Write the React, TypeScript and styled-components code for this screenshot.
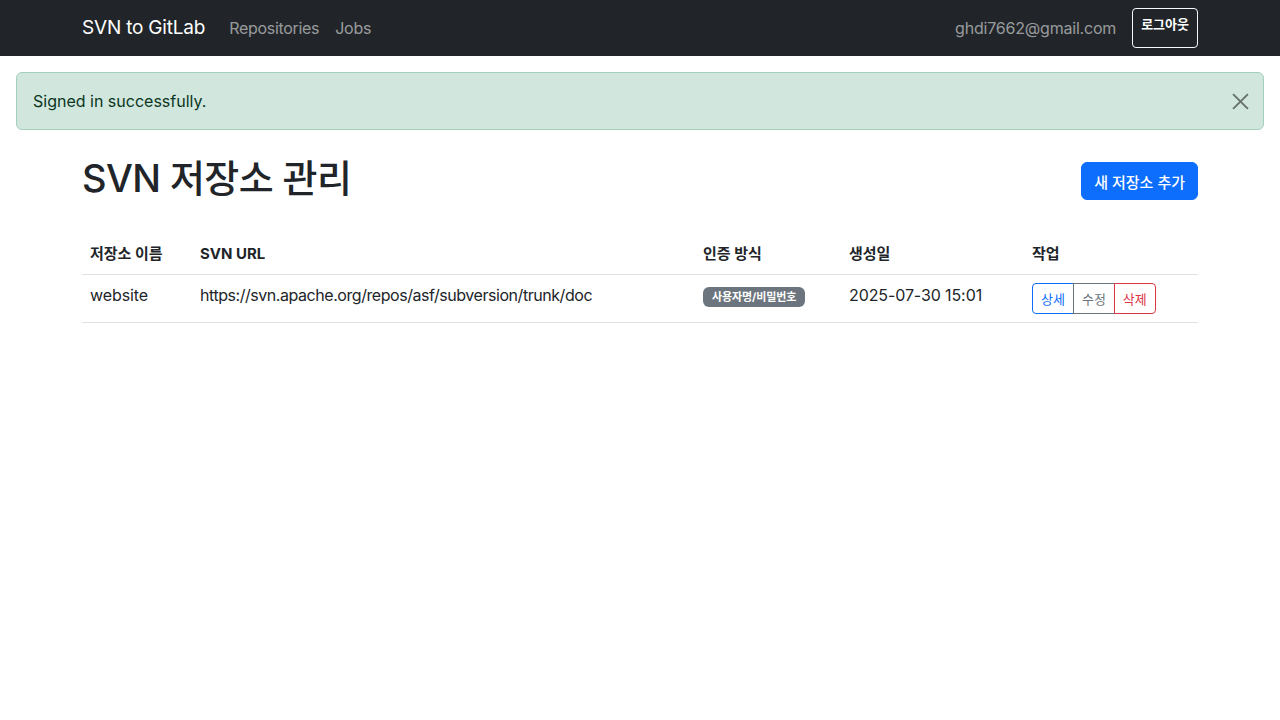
import React from 'react';
import styled, { createGlobalStyle } from 'styled-components';

const GlobalStyle = createGlobalStyle`
    * { box-sizing: border-box; }
    body {
        margin: 0;
        font-family: Inter, "Noto Sans CJK KR", "Noto Sans", sans-serif;
        font-size: 16px;
        line-height: 1.5;
        color: #212529;
        background: #fff;
    }
`;

const Navbar = styled.nav`
    height: 56px;
    background: #212529;
`;

const Container = styled.div`
    width: 1140px;
    margin: 0 auto;
    padding: 0 12px;
`;

const NavInner = styled(Container)`
    height: 56px;
    display: flex;
    align-items: center;
    justify-content: space-between;
`;

const Brand = styled.span`
    font-size: 19px;
    color: #fff;
    margin-right: 24px;
    letter-spacing: -0.2px;
`;

const NavLeft = styled.div`
    display: flex;
    align-items: center;
`;

const NavLink = styled.a`
    color: rgba(255, 255, 255, 0.55);
    font-size: 16px;
    letter-spacing: -0.3px;
    & + & { margin-left: 16px; }
`;

const NavRight = styled.div`
    display: flex;
    align-items: stretch;
    height: 40px;
`;

const UserEmail = styled.span`
    color: rgba(255, 255, 255, 0.55);
    font-size: 16px;
    align-self: center;
    margin-right: 16px;
    letter-spacing: -0.2px;
`;

const LogoutButton = styled.button`
    font-family: inherit;
    background: transparent;
    border: 1px solid #f8f9fa;
    color: #fff;
    border-radius: 4px;
    font-size: 13px;
    font-weight: 600;
    padding: 6px 8px 0;
    line-height: 18px;
    display: flex;
    align-items: flex-start;
`;

const Alert = styled.div`
    margin: 16px;
    height: 58px;
    padding: 0 16px;
    display: flex;
    align-items: center;
    justify-content: space-between;
    background: #d1e7dd;
    border: 1px solid #a3cfbb;
    border-radius: 6px;
    color: #0a3622;
    font-size: 16px;
`;

const CloseButton = styled.button`
    background: transparent;
    border: 0;
    padding: 0;
    width: 18px;
    height: 18px;
    margin-right: -2px;
    opacity: 0.5;
    display: flex;
    align-items: center;
    justify-content: center;
`;

const Header = styled.div`
    display: flex;
    align-items: center;
    justify-content: space-between;
    margin-top: 24px;
    margin-bottom: 32px;
`;

const Title = styled.h1`
    margin: 0;
    font-size: 38px;
    font-weight: 500;
    line-height: 48px;
    letter-spacing: -0.6px;
`;

const PrimaryButton = styled.button`
    font-family: inherit;
    background: #0d6efd;
    color: #fff;
    border: 1px solid #0d6efd;
    border-radius: 6px;
    font-size: 15px;
    font-weight: 500;
    height: 38px;
    padding: 0 12px;
    margin-top: 6px;
`;

const Table = styled.table`
    width: 100%;
    border-collapse: collapse;
`;

const Th = styled.th<{ $w: number }>`
    width: ${(p) => p.$w}px;
    text-align: left;
    font-size: 15px;
    font-weight: 700;
    padding: 8px;
    height: 40px;
    border-bottom: 1px solid #dee2e6;
`;

const Td = styled.td<{ $tight?: boolean }>`
    padding: 8px;
    height: 48px;
    vertical-align: top;
    font-size: 16px;
    border-bottom: 1px solid #dee2e6;
    letter-spacing: ${(p) => (p.$tight ? '-0.45px' : '-0.1px')};
`;

const Badge = styled.span`
    display: inline-block;
    background: #6c757d;
    color: #fff;
    font-size: 11px;
    font-weight: 700;
    line-height: 20px;
    padding: 0 9px;
    border-radius: 6px;
    margin-top: 4px;
`;

const ButtonGroup = styled.div`
    display: inline-flex;
`;

const GroupButton = styled.button<{ $color: string }>`
    font-family: inherit;
    background: #fff;
    color: ${(p) => p.$color};
    border: 1px solid ${(p) => p.$color};
    font-size: 13px;
    height: 31px;
    padding: 0 8px;
    margin-left: -1px;
    &:first-child { margin-left: 0; border-radius: 4px 0 0 4px; }
    &:last-child { border-radius: 0 4px 4px 0; }
`;

export default function App() {
    return (
        <>
            <GlobalStyle />
            <Navbar>
                <NavInner>
                    <NavLeft>
                        <Brand>SVN to GitLab</Brand>
                        <NavLink>Repositories</NavLink>
                        <NavLink>Jobs</NavLink>
                    </NavLeft>
                    <NavRight>
                        <UserEmail>ghdi7662@gmail.com</UserEmail>
                        <LogoutButton>로그아웃</LogoutButton>
                    </NavRight>
                </NavInner>
            </Navbar>
            <Alert>
                <span>Signed in successfully.</span>
                <CloseButton aria-label="Close">
                    <svg width="17" height="17" viewBox="0 0 16 16">
                        <path d="M1 1L15 15M15 1L1 15" stroke="#000" strokeWidth="1.8" />
                    </svg>
                </CloseButton>
            </Alert>
            <Container>
                <Header>
                    <Title>SVN 저장소 관리</Title>
                    <PrimaryButton>새 저장소 추가</PrimaryButton>
                </Header>
                <Table>
                    <thead>
                        <tr>
                            <Th $w={110}>저장소 이름</Th>
                            <Th $w={503}>SVN URL</Th>
                            <Th $w={146}>인증 방식</Th>
                            <Th $w={183}>생성일</Th>
                            <Th $w={174}>작업</Th>
                        </tr>
                    </thead>
                    <tbody>
                        <tr>
                            <Td>website</Td>
                            <Td $tight>https://svn.apache.org/repos/asf/subversion/trunk/doc</Td>
                            <Td><Badge>사용자명/비밀번호</Badge></Td>
                            <Td>2025-07-30 15:01</Td>
                            <Td>
                                <ButtonGroup>
                                    <GroupButton $color="#0d6efd">상세</GroupButton>
                                    <GroupButton $color="#6c757d">수정</GroupButton>
                                    <GroupButton $color="#dc3545">삭제</GroupButton>
                                </ButtonGroup>
                            </Td>
                        </tr>
                    </tbody>
                </Table>
            </Container>
        </>
    );
}
